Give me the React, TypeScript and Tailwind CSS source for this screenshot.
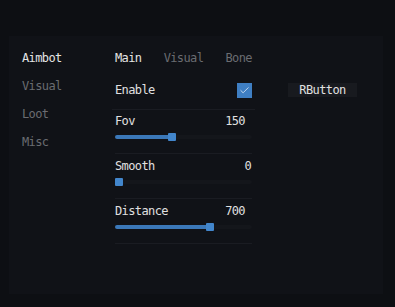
import { Check } from 'lucide-react';

const font = { fontFamily: '"DejaVu Sans Mono", "Liberation Mono", monospace' };

type SliderProps = { label: string; value: string; pct: number; valuePad: string; first?: boolean };

const SliderRow: React.FC<SliderProps> = ({ label, value, pct, valuePad, first }) => (
    <div className={`border-b border-[#1a1c22] pb-[12px] ${first ? 'pt-[5px]' : 'pt-[6px]'}`}>
        <div className={`flex h-[13px] items-center justify-between leading-[13px] ${valuePad}`}>
            <span className="text-[#e0e0e0]">{label}</span>
            <span className="text-[#e0e0e0]">{value}</span>
        </div>
        <div className="relative mt-[5px] h-[8px] w-[137px]">
            <div className="absolute left-0 right-0 top-[2px] h-[4px] rounded-full bg-[#14161b]" />
            <div
                className="absolute left-0 top-[2px] h-[4px] rounded-full bg-[#3b78b9]"
                style={{ width: `${pct * 129 + 4}px` }}
            />
            <div
                className="absolute top-0 h-[8px] w-[8px] rounded-[1px] bg-[#4286cc]"
                style={{ left: `${pct * 129}px` }}
            />
        </div>
    </div>
);

const App: React.FC = () => {
    return (
        <div
            className="h-[307px] w-[395px] bg-[#0d0f13] pt-[36px] pl-[9px] text-[12px] font-normal tracking-[-0.6px]"
            style={font}
        >
            <div className="flex h-[258px] w-[374px] bg-[#101217] pt-[16px] pl-[13px]">
                <div className="flex w-[90px] flex-col gap-[15px] leading-[13px]">
                    <span className="h-[13px] text-[#e4e4e4]">Aimbot</span>
                    <span className="h-[13px] text-[#6a6c71]">Visual</span>
                    <span className="h-[13px] text-[#6a6c71]">Loot</span>
                    <span className="h-[13px] text-[#6a6c71]">Misc</span>
                </div>
                <div className="flex w-[143px] flex-col">
                    <div className="flex h-[13px] justify-between px-[3px] leading-[13px]">
                        <span className="text-[#e4e4e4]">Main</span>
                        <span className="text-[#6a6c71]">Visual</span>
                        <span className="text-[#6a6c71]">Bone</span>
                    </div>
                    <div className="mt-[17px] border-b border-[#1a1c22] pb-[11px]">
                        <div className="flex h-[16px] items-center justify-between px-[3px]">
                            <span className="text-[#e0e0e0]">Enable</span>
                            <div className="flex h-[15px] w-[15px] items-center justify-center bg-[#3f7fc3]">
                                <Check className="h-[11px] w-[11px] text-white" strokeWidth={1.5} />
                            </div>
                        </div>
                    </div>
                    <div className="px-[3px]">
                        <SliderRow label="Fov" value="150" pct={0.41} valuePad="pr-[7px]" first />
                        <SliderRow label="Smooth" value="0" pct={0} valuePad="pr-[1px]" />
                        <SliderRow label="Distance" value="700" pct={0.705} valuePad="pr-[7px]" />
                    </div>
                </div>
                <div className="ml-[33px] mt-[31px] flex h-[14px] w-[69px] items-center justify-center bg-[#181a1f] text-[#e0e0e0]">
                    RButton
                </div>
            </div>
        </div>
    );
};

export default App;
